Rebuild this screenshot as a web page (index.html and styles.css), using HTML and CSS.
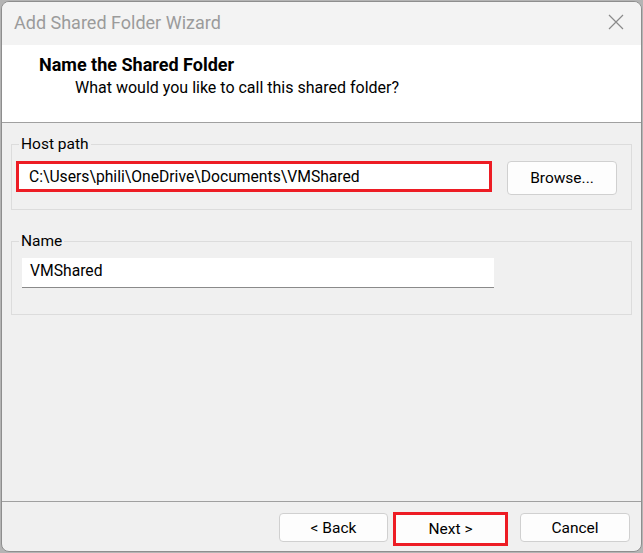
FILE: index.html
```html
<!DOCTYPE html>
<html>
<head>
<meta charset="utf-8">
<link rel="stylesheet" href="styles.css">
</head>
<body>
<div class="window">
  <div class="titlebar">
    <span class="title">Add Shared Folder Wizard</span>
    <svg class="close" width="16" height="16" viewBox="0 0 16 16"><path d="M1 1 L15 15 M15 1 L1 15" stroke="#8a8a8a" stroke-width="1.2" fill="none"/></svg>
  </div>
  <div class="header">
    <div class="h-title">Name the Shared Folder</div>
    <div class="h-sub">What would you like to call this shared folder?</div>
  </div>
  <div class="content">
    <fieldset class="group group-host">
      <legend class="legend">Host path</legend>
      <div class="row">
        <div class="field field-red">C:\Users\phili\OneDrive\Documents\VMShared</div>
        <div class="btn btn-browse">Browse...</div>
      </div>
    </fieldset>
    <fieldset class="group group-name">
      <legend class="legend">Name</legend>
      <div class="field field-name">VMShared</div>
    </fieldset>
  </div>
  <div class="footer">
    <div class="btn btn-back">&lt; Back</div>
    <div class="btn btn-next">Next &gt;</div>
    <div class="btn btn-cancel">Cancel</div>
  </div>
</div>
</body>
</html>
```
FILE: styles.css
```css
html, body {
  margin: 0;
  padding: 0;
  background: #b4b4b4;
  width: 643px;
  height: 553px;
  overflow: hidden;
}
body {
  font-family: "Roboto", "Liberation Sans", sans-serif;
  color: #000;
}
.window {
  box-sizing: border-box;
  margin: 1px 1px 0 1px;
  width: 641px;
  height: 551px;
  border: 1px solid #8e8e8e;
  border-radius: 8px;
  overflow: hidden;
  display: flex;
  flex-direction: column;
  background: #f0f0f0;
}
.titlebar {
  height: 43px;
  flex: none;
  background: #f3f3f3;
  display: flex;
  align-items: center;
  justify-content: space-between;
  padding: 0 17px 3px 12px;
  box-sizing: border-box;
}
.title {
  font-size: 18px;
  color: #9b9b9b;
}
.close {
  display: block;
}
.header {
  flex: none;
  background: #fff;
  border-bottom: 1px solid #a0a0a0;
  box-sizing: border-box;
  height: 78px;
  padding: 9px 0 0 37px;
}
.h-title {
  font-weight: bold;
  font-size: 18px;
  line-height: 21px;
}
.h-sub {
  font-size: 16px;
  line-height: 20px;
  margin: 3px 0 0 36px;
}
.content {
  flex: 1;
  padding: 12px 9px 0 9px;
  display: flex;
  flex-direction: column;
  gap: 22px;
}
.group {
  margin: 0;
  border: 1px solid #dcdcdc;
  padding: 0;
  font-size: 15.5px;
}
.legend {
  padding: 0 2px;
  margin-left: 7px;
  line-height: 18px;
}
.group-host {
  height: 75px;
  box-sizing: border-box;
}
.group-name {
  height: 83px;
  box-sizing: border-box;
}
.row {
  display: flex;
  align-items: flex-start;
  margin: 8px 0 0 4px;
}
.field {
  background: #fff;
  font-size: 15.7px;
  box-sizing: border-box;
}
.field-red {
  width: 476px;
  height: 31px;
  border: 3px solid #ed1c24;
  padding: 3px 0 0 10px;
  line-height: 20px;
}
.btn {
  box-sizing: border-box;
  border: 1px solid #d0d0d0;
  border-radius: 4px;
  background: #fdfdfd;
  font-size: 15.5px;
  display: flex;
  align-items: center;
  justify-content: center;
}
.btn-browse {
  width: 110px;
  height: 34px;
  margin-left: 15px;
}
.field-name {
  width: 472px;
  height: 30px;
  margin: 8px 0 0 10px;
  border-bottom: 1px solid #8a8a8a;
  padding: 3px 0 0 8px;
  line-height: 20px;
}
.footer {
  flex: none;
  box-sizing: border-box;
  height: 50px;
  border-top: 1px solid #a0a0a0;
  display: flex;
  align-items: flex-start;
  padding: 11px 0 0 277px;
}
.btn-back {
  width: 109px;
  height: 29px;
}
.btn-next {
  width: 115px;
  height: 34px;
  margin-left: 5px;
  margin-top: -1px;
  border: 3px solid #ed1c24;
  border-radius: 0;
}
.btn-cancel {
  width: 110px;
  height: 29px;
  margin-left: 12px;
}
```
